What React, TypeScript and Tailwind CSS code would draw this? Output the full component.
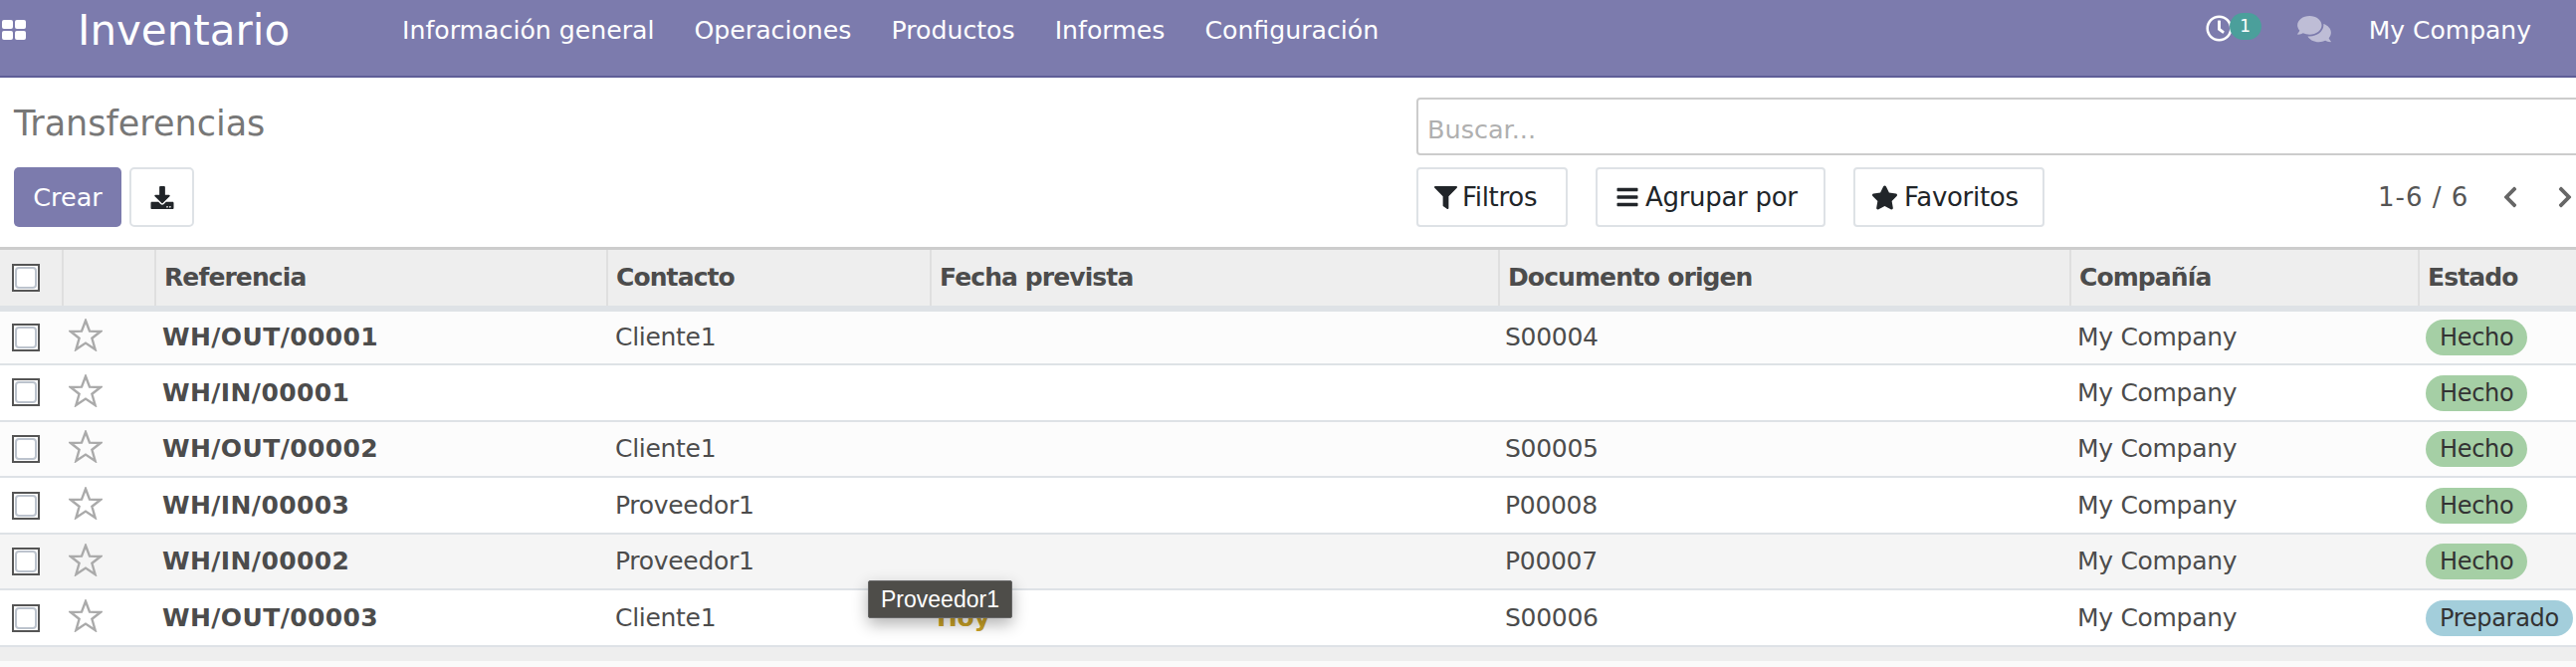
import { FaComments, FaRegClock, FaFilter, FaBars, FaStar, FaChevronLeft, FaChevronRight, FaDownload } from 'react-icons/fa'

interface Row {
  ref: string
  contact: string
  origin: string
  state: 'Hecho' | 'Preparado'
  bg: string
  today?: boolean
}

const rows: Row[] = [
  { ref: 'WH/OUT/00001', contact: 'Cliente1', origin: 'S00004', state: 'Hecho', bg: 'bg-[#fcfcfc]' },
  { ref: 'WH/IN/00001', contact: '', origin: '', state: 'Hecho', bg: 'bg-white' },
  { ref: 'WH/OUT/00002', contact: 'Cliente1', origin: 'S00005', state: 'Hecho', bg: 'bg-[#fcfcfc]' },
  { ref: 'WH/IN/00003', contact: 'Proveedor1', origin: 'P00008', state: 'Hecho', bg: 'bg-white' },
  { ref: 'WH/IN/00002', contact: 'Proveedor1', origin: 'P00007', state: 'Hecho', bg: 'bg-[#f5f5f5]' },
  { ref: 'WH/OUT/00003', contact: 'Cliente1', origin: 'S00006', state: 'Preparado', bg: 'bg-white', today: true },
]

const menu = ['Información general', 'Operaciones', 'Productos', 'Informes', 'Configuración']
const heads = ['Referencia', 'Contacto', 'Fecha prevista', 'Documento origen', 'Compañía', 'Estado']
const cols = [63, 93, 454, 325, 571, 574, 350, 158]

function Check() {
  return (
    <span className="flex h-7 w-7 items-center justify-center border-2 border-[#555] bg-white">
      <span className="block h-[22px] w-[22px] rounded-[4px] border-2 border-[#bcc3cd] bg-white" />
    </span>
  )
}

function StarOutline() {
  return (
    <svg width="34" height="33" viewBox="0 0 34 33" className="block">
      <polygon
        points="17,2 21,12.6 32,13 23.4,19.8 26.6,31 17,24.6 7.4,31 10.6,19.8 2,13 13,12.6"
        fill="none"
        stroke="#aaaaaa"
        strokeWidth="2.4"
      />
    </svg>
  )
}

export default function App() {
  return (
    <div
      className="relative h-[670px] w-[2588px] overflow-hidden bg-white text-[#4c4c4c]"
      style={{ fontFamily: '"DejaVu Sans", sans-serif' }}
    >
      <header className="flex h-[78px] items-start border-b-2 border-[#5f5e97] bg-[#7c7bad] text-white">
        <div className="ml-[2px] mt-5 grid h-5 w-6 grid-cols-2 gap-[2px]">
          <span className="rounded-[2px] bg-white" />
          <span className="rounded-[2px] bg-white" />
          <span className="rounded-[2px] bg-white" />
          <span className="rounded-[2px] bg-white" />
        </div>
        <div className="ml-[52px] w-[326px] text-[42px] leading-[62px]">Inventario</div>
        <nav className="flex gap-[40px] text-[25.2px] leading-[62px]">
          {menu.map(m => (
            <span key={m}>{m}</span>
          ))}
        </nav>
        <div className="ml-auto mr-[45px] flex items-start">
          <div className="relative mt-[15px] h-[27px] w-[60px]">
            <FaRegClock className="h-[27px] w-[27px]" />
            <span className="absolute left-6 top-[-2px] flex h-[27px] w-8 items-center justify-center rounded-full bg-[#4b9f9b] text-[17px] leading-none">
              1
            </span>
          </div>
          <FaComments className="ml-[32px] mt-[14px] h-[30px] w-[34px] text-white/50" />
          <span className="ml-[38px] text-[25px] leading-[62px]">My Company</span>
        </div>
      </header>

      <div className="grid h-[170px] grid-cols-[1423px_1fr]">
        <div className="flex flex-col pl-[14px]">
          <h1 className="mt-[26px] h-[64px] text-[35px] leading-10 text-[#777]">Transferencias</h1>
          <div className="flex gap-2">
            <button className="h-[60px] w-[108px] rounded-[5px] bg-[#7c7bad] text-[25.5px] text-white">Crear</button>
            <button className="flex h-[60px] w-[65px] items-center justify-center rounded-[5px] border-2 border-[#dee2e6] bg-white">
              <FaDownload className="h-[23px] w-6 text-[#212529]" />
            </button>
          </div>
        </div>
        <div className="flex flex-col overflow-hidden">
          <div className="mt-5 h-[58px] w-[1300px] rounded-[4px] border-2 border-[#ccc] bg-white pl-[9px] pt-[2px] text-[25.5px] leading-[56px] text-[#b0b0b0]">
            Buscar...
          </div>
          <div className="mt-3 flex items-center text-[26px] tracking-[-0.3px] text-[#212529]">
            <button className="flex h-[60px] w-[152px] items-center gap-[5px] rounded-[4px] border-2 border-[#dee2e6] pl-[16px]">
              <FaFilter className="h-[23px] w-[23px]" /> Filtros
            </button>
            <button className="ml-[28px] flex h-[60px] w-[231px] items-center gap-[6px] rounded-[4px] border-2 border-[#dee2e6] pl-[18px]">
              <FaBars className="h-[24px] w-[24px]" /> Agrupar por
            </button>
            <button className="ml-[28px] flex h-[60px] w-[192px] items-center gap-[6px] rounded-[4px] border-2 border-[#dee2e6] pl-[16px]">
              <FaStar className="h-[27px] w-[27px]" /> Favoritos
            </button>
            <span className="ml-[335px] tracking-[1px] text-[#555]">1-6 / 6</span>
            <FaChevronLeft className="ml-[33px] h-6 w-[18px] shrink-0 text-[#666]" />
            <FaChevronRight className="ml-[37px] h-6 w-[18px] shrink-0 text-[#666]" />
          </div>
        </div>
      </div>

      <table className="w-[2588px] table-fixed border-collapse text-[25px] tracking-[-0.3px]">
        <colgroup>
          {cols.map((w, i) => (
            <col key={i} style={{ width: w }} />
          ))}
        </colgroup>
        <thead>
          <tr className="h-[60px] border-t-[3px] border-b-[6px] border-t-[#ccc] border-b-[#dee2e6] bg-[#eeeeee]">
            <th className="border-r-2 border-[#dfdfdf] pl-3 align-middle">
              <Check />
            </th>
            <th className="border-r-2 border-[#dfdfdf]" />
            {heads.map((h, i) => (
              <th
                key={h}
                className={`pl-2 text-left font-bold tracking-[-0.9px] ${i < heads.length - 1 ? 'border-r-2 border-[#dfdfdf]' : ''}`}
              >
                {h}
              </th>
            ))}
          </tr>
        </thead>
        <tbody>
          {rows.map(r => (
            <tr key={r.ref} className={`h-[56.6px] border-b-2 border-[#dee2e6] ${r.bg}`}>
              <td className="pl-3">
                <Check />
              </td>
              <td className="pl-[6px] pb-1">
                <StarOutline />
              </td>
              <td className="pl-[7px] font-bold tracking-[0.4px]">{r.ref}</td>
              <td className="pl-2">{r.contact}</td>
              <td className="pl-[6px] font-bold text-[#c9a227]">{r.today ? 'Hoy' : ''}</td>
              <td className="pl-[6px]">{r.origin}</td>
              <td className="pl-[7px]">My Company</td>
              <td className="pl-[7px]">
                <span
                  className={`inline-flex h-9 items-center whitespace-nowrap rounded-full px-[14px] text-[24px] text-[#333] ${
                    r.state === 'Hecho' ? 'bg-[#a5cfa5]' : 'bg-[#a3cedb]'
                  }`}
                >
                  {r.state}
                </span>
              </td>
            </tr>
          ))}
        </tbody>
      </table>
      <div className="h-[14px] bg-[#eeeeee]" />
      <div className="h-2 bg-[#fafafa]" />

      <div
        className="absolute left-[872px] top-[583px] flex h-[38px] w-[145px] items-center justify-center rounded-[2px] border border-[#666] bg-[#4e4d49] text-[23px] text-white shadow-[0_6px_16px_rgba(0,0,0,0.3)]"
        style={{ fontFamily: '"Liberation Sans", sans-serif' }}
      >
        Proveedor1
      </div>
    </div>
  )
}
